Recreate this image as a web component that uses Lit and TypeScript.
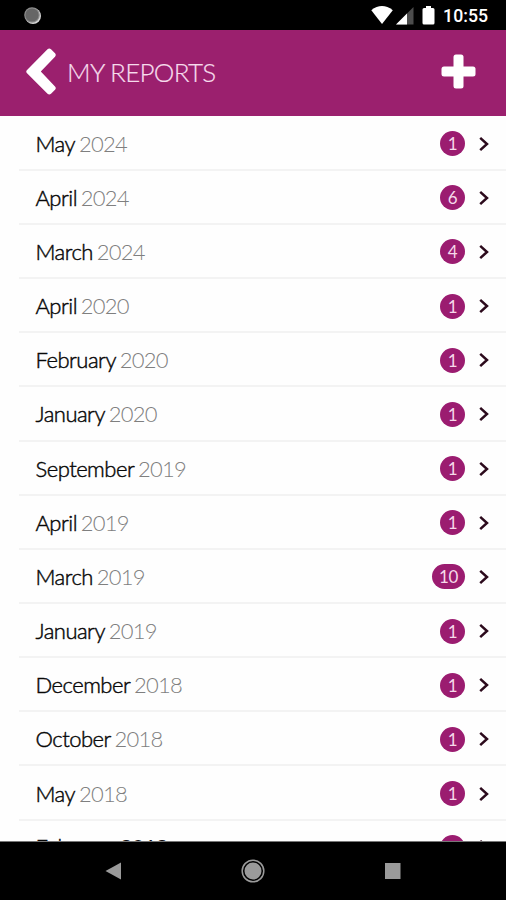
import { LitElement, html, css } from "lit";
import { customElement } from "lit/decorators.js";

interface Report {
  month: string;
  year: number;
  count: number;
}

const REPORTS: Report[] = [
  { month: "May", year: 2024, count: 1 },
  { month: "April", year: 2024, count: 6 },
  { month: "March", year: 2024, count: 4 },
  { month: "April", year: 2020, count: 1 },
  { month: "February", year: 2020, count: 1 },
  { month: "January", year: 2020, count: 1 },
  { month: "September", year: 2019, count: 1 },
  { month: "April", year: 2019, count: 1 },
  { month: "March", year: 2019, count: 10 },
  { month: "January", year: 2019, count: 1 },
  { month: "December", year: 2018, count: 1 },
  { month: "October", year: 2018, count: 1 },
  { month: "May", year: 2018, count: 1 },
  { month: "February", year: 2018, count: 1 },
];

@customElement("app-root")
export class AppRoot extends LitElement {
  static styles = css`
    :host {
      display: flex;
      flex-direction: column;
      width: 506px;
      height: 900px;
      overflow: hidden;
      background: #fefefe;
      font-family: Lato, sans-serif;
    }
    svg {
      display: block;
      flex: none;
    }
    .status {
      flex: none;
      height: 30px;
      box-sizing: border-box;
      display: flex;
      align-items: center;
      padding: 0 18px 0 23px;
      background: #000;
      color: #fff;
      font: 500 17.7px/30px Roboto, sans-serif;
    }
    .clock {
      padding-top: 2px;
      margin-left: 8px;
    }
    .gap {
      flex: 1;
    }
    header {
      flex: none;
      height: 86px;
      box-sizing: border-box;
      display: flex;
      align-items: center;
      padding: 0 30px 3px 26px;
      background: #9b206e;
      color: #f6dcec;
    }
    h1 {
      margin: 1px 0 0 11px;
      font-weight: 300;
      font-size: 26px;
      line-height: 30px;
      letter-spacing: -0.7px;
      -webkit-text-stroke: 0.2px #f6dcec;
    }
    .list {
      flex: 1;
      min-height: 0;
      overflow: hidden;
      border-bottom: 1px solid #777;
    }
    .row {
      height: 54.17px;
      box-sizing: border-box;
      margin-left: 19px;
      padding: 2px 16px 0 16.5px;
      display: flex;
      align-items: center;
      border-bottom: 2px solid #f3f3f3;
    }
    .row:first-child {
      margin-top: 0.6px;
    }
    .label {
      flex: 1;
      font-size: 22px;
      line-height: 28px;
      color: #080808;
    }
    .month {
      font-weight: 300;
      letter-spacing: -0.5px;
      -webkit-text-stroke: 0.45px #080808;
    }
    .year {
      font-weight: 300;
      margin-left: 3.8px;
      letter-spacing: -0.75px;
      color: #7f7f7f;
    }
    .row:last-child {
      padding-top: 1px;
    }
    .row:last-child .year {
      font-weight: 400;
      color: #111;
    }
    .badge {
      box-sizing: border-box;
      min-width: 25px;
      height: 25px;
      padding: 0 7px;
      border-radius: 12.5px;
      background: #9b1c70;
      color: #f6d9ea;
      font-size: 17px;
      line-height: 25px;
      letter-spacing: -0.3px;
      text-align: center;
      margin-right: 13px;
    }
    nav {
      flex: none;
      height: 58px;
      box-sizing: border-box;
      display: flex;
      justify-content: space-between;
      align-items: center;
      padding: 0 104px;
      background: #000;
    }
  `;

  private renderStatus() {
    return html`<div class="status">
      <svg width="19" height="19" viewBox="0 0 19 19">
        <circle cx="10" cy="10" r="8" fill="#d6d6d6" />
        <circle cx="9" cy="9" r="7.8" fill="#8c8c8c" />
        <circle cx="9" cy="9" r="6.6" fill="#666" />
      </svg>
      <span class="gap"></span>
      <svg width="51" height="30" viewBox="371 0 51 30" fill="#fff">
        <path d="M371.3 10.2Q382 1.8 392.8 10.2L382 24Z" />
        <path d="M396 24.500L413.500 7V24.500Z" fill="#4c4c4c" />
        <path d="M396 24.500L407 13.500V24.500Z" />
      </svg>
      <svg width="13" height="30" viewBox="0 0 13 30" fill="#fff">
        <path d="M4 6h5v2h2q1.500 0 1.500 1.500v13.500q0 1.500-1.500 1.500h-9q-1.500 0-1.500-1.500v-13.500q0-1.500 1.500-1.500h2z" />
      </svg>
      <span class="clock">10:55</span>
    </div>`;
  }

  private renderRow(r: Report) {
    return html`<div class="row">
      <span class="label"><span class="month">${r.month}</span><span class="year">${r.year}</span></span>
      <span class="badge">${r.count}</span>
      <svg width="12" height="16" viewBox="0 0 12 16">
        <path d="M2.200 1.800L9 8L2.200 14.200" fill="none" stroke="#2c0a1c" stroke-width="2.500" />
      </svg>
    </div>`;
  }

  render() {
    return html`
      ${this.renderStatus()}
      <header>
        <svg width="30" height="48" viewBox="26 47 30 48">
          <path
            d="M26.800 69.300L47.500 48.300Q49.300 46.700 51 48.300L55 52.300Q56.500 54 55 55.700L40.800 70.600L55 85.500Q56.500 87.200 55 88.800L51 92.800Q49.300 94.300 47.500 92.800L26.800 71.900Q25.700 70.600 26.800 69.300Z"
            fill="#fff"
          />
        </svg>
        <h1>MY REPORTS</h1>
        <span class="gap"></span>
        <svg width="35" height="35" viewBox="0 0 35 35" fill="#fff">
          <rect x="12.500" y="0.500" width="10" height="34" rx="2.500" />
          <rect x="0.500" y="12.500" width="34" height="10" rx="2.500" />
        </svg>
      </header>
      <div class="list">${REPORTS.map((r) => this.renderRow(r))}</div>
      <nav>
        <svg width="18" height="18" viewBox="0 0 18 18">
          <path d="M1.500 9L17 0.500V17.500Z" fill="#9a9a9a" />
        </svg>
        <svg width="24" height="24" viewBox="0 0 24 24">
          <circle cx="12" cy="12" r="10.800" fill="none" stroke="#9a9a9a" stroke-width="1.500" />
          <circle cx="12" cy="12" r="8.500" fill="#9a9a9a" />
        </svg>
        <svg width="18" height="18" viewBox="0 0 18 18">
          <rect x="1" y="1" width="15.500" height="16" fill="#9a9a9a" />
        </svg>
      </nav>
    `;
  }
}
